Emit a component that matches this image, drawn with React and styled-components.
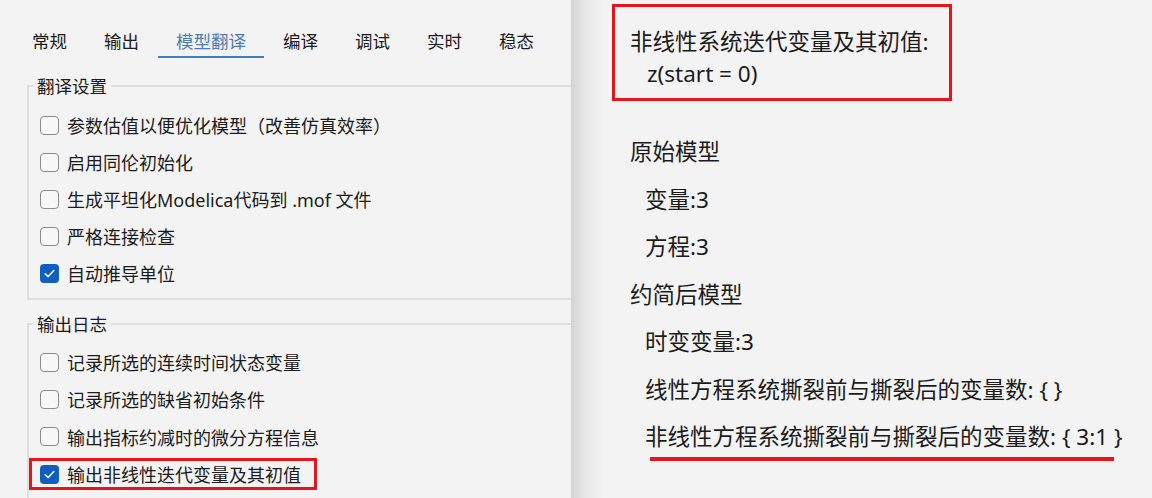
import React from "react";
import styled, { createGlobalStyle } from "styled-components";

const Global = createGlobalStyle`
  html, body { margin: 0; padding: 0; }
  body {
    width: 1152px;
    height: 498px;
    overflow: hidden;
    background: #f3f3f3;
    font-family: "Noto Sans", "Noto Sans CJK SC", sans-serif;
    color: #1b1b1b;
  }
`;

const Page = styled.div`
  display: flex;
  width: 1152px;
  height: 498px;
  overflow: hidden;
`;

const LeftPanel = styled.div`
  width: 571px;
  flex: none;
  display: flex;
  flex-direction: column;
  background: #f3f3f3;
  overflow: hidden;
`;

const TopStrip = styled.div`
  height: 8px;
  background: #eef2ec;
`;

const TabBar = styled.div`
  display: flex;
  gap: 1px;
  margin: 29px 0 0 14px;
`;

const Tab = styled.div`
  padding: 0 18px 3px;
  font-size: 17.5px;
  line-height: 24px;
  white-space: nowrap;
  color: ${(p) => (p.$active ? "#4d7cb2" : "#1b1b1b")};
  border-bottom: 2px solid ${(p) => (p.$active ? "#3d7fc2" : "transparent")};
`;

const Group = styled.fieldset`
  margin: ${(p) => p.$mt}px -20px 0 27px;
  padding: ${(p) => p.$pt}px 0 ${(p) => p.$pb}px 11px;
  border: 2px solid #dedede;
  display: flex;
  flex-direction: column;
  align-items: flex-start;
  gap: ${(p) => p.$gap}px;
  min-width: 0;
`;

const Legend = styled.legend`
  margin-left: -7px;
  padding: 0 4px;
  font-size: 17.5px;
  line-height: 24px;
  color: #1b1b1b;
`;

const Row = styled.label`
  display: flex;
  align-items: center;
  gap: 8px;
  height: 24px;
  font-size: 18px;
  white-space: nowrap;
  ${(p) =>
    p.$highlight &&
    `
    border: 3px solid #e8131b;
    padding: 1px 13px 1px 8px;
    margin: -4px 0 -4px -11px;
  `}
`;

const Box = styled.span`
  width: 19px;
  height: 19px;
  box-sizing: border-box;
  border-radius: 4px;
  flex: none;
  display: flex;
  align-items: center;
  justify-content: center;
  background: ${(p) => (p.$checked ? "#0f5fc2" : "#f7f7f7")};
  border: ${(p) => (p.$checked ? "none" : "1.5px solid #8b8b8b")};
`;

const RightPanel = styled.div`
  flex: 1;
  display: flex;
  flex-direction: column;
  align-items: flex-start;
  padding-left: 41px;
  background: linear-gradient(to right, #d2d2d2 0px, #e6e6e6 12px, #f3f3f3 34px);
  font-size: 22.5px;
  color: #1b1b1b;
`;

const NoteBox = styled.div`
  margin-top: 4px;
  width: 340px;
  height: 97px;
  box-sizing: border-box;
  border: 3px solid #e8131b;
  padding: 19px 15px 8px;
  line-height: 32px;
`;

const NoteLine = styled.div`
  white-space: nowrap;
  padding-left: ${(p) => (p.$indent ? 17 : 0)}px;
`;

const Stats = styled.div`
  margin: 27px 0 0 18px;
  display: flex;
  flex-direction: column;
`;

const StatLine = styled.div`
  line-height: 47.5px;
  white-space: nowrap;
  padding-left: ${(p) => (p.$indent ? 15 : 0)}px;
`;

const Underline = styled.div`
  margin: -4px 0 0 20px;
  width: 464px;
  height: 4px;
  background: #e8131b;
`;

const Check = () => (
  <svg width="13" height="13" viewBox="0 0 13 13">
    <polyline
      points="2.2,6.8 5.2,9.6 10.8,3.6"
      fill="none"
      stroke="#ffffff"
      strokeWidth="1.5"
      strokeLinecap="round"
      strokeLinejoin="round"
    />
  </svg>
);

const CheckRow = ({ checked, highlight, children }) => (
  <Row $highlight={highlight}>
    <Box $checked={checked}>{checked && <Check />}</Box>
    <span>{children}</span>
  </Row>
);

const tabs = ["常规", "输出", "模型翻译", "编译", "调试", "实时", "稳态"];

export default function App() {
  return (
    <>
      <Global />
      <Page>
        <LeftPanel>
          <TopStrip />
          <TabBar>
            {tabs.map((t) => (
              <Tab key={t} $active={t === "模型翻译"}>
                {t}
              </Tab>
            ))}
          </TabBar>
          <Group $mt={16} $pt={15} $pb={13} $gap={13}>
            <Legend>翻译设置</Legend>
            <CheckRow>参数估值以便优化模型（改善仿真效率）</CheckRow>
            <CheckRow>启用同伦初始化</CheckRow>
            <CheckRow>生成平坦化Modelica代码到 .mof 文件</CheckRow>
            <CheckRow>严格连接检查</CheckRow>
            <CheckRow checked>自动推导单位</CheckRow>
          </Group>
          <Group $mt={12} $pt={14} $pb={40} $gap={13.4}>
            <Legend>输出日志</Legend>
            <CheckRow>记录所选的连续时间状态变量</CheckRow>
            <CheckRow>记录所选的缺省初始条件</CheckRow>
            <CheckRow>输出指标约减时的微分方程信息</CheckRow>
            <CheckRow checked highlight>
              输出非线性迭代变量及其初值
            </CheckRow>
          </Group>
        </LeftPanel>
        <RightPanel>
          <NoteBox>
            <NoteLine>非线性系统迭代变量及其初值:</NoteLine>
            <NoteLine $indent>z(start = 0)</NoteLine>
          </NoteBox>
          <Stats>
            <StatLine>原始模型</StatLine>
            <StatLine $indent>变量:3</StatLine>
            <StatLine $indent>方程:3</StatLine>
            <StatLine>约简后模型</StatLine>
            <StatLine $indent>时变变量:3</StatLine>
            <StatLine $indent>线性方程系统撕裂前与撕裂后的变量数: {"{ }"}</StatLine>
            <StatLine $indent>非线性方程系统撕裂前与撕裂后的变量数: {"{ 3:1 }"}</StatLine>
            <Underline />
          </Stats>
        </RightPanel>
      </Page>
    </>
  );
}
